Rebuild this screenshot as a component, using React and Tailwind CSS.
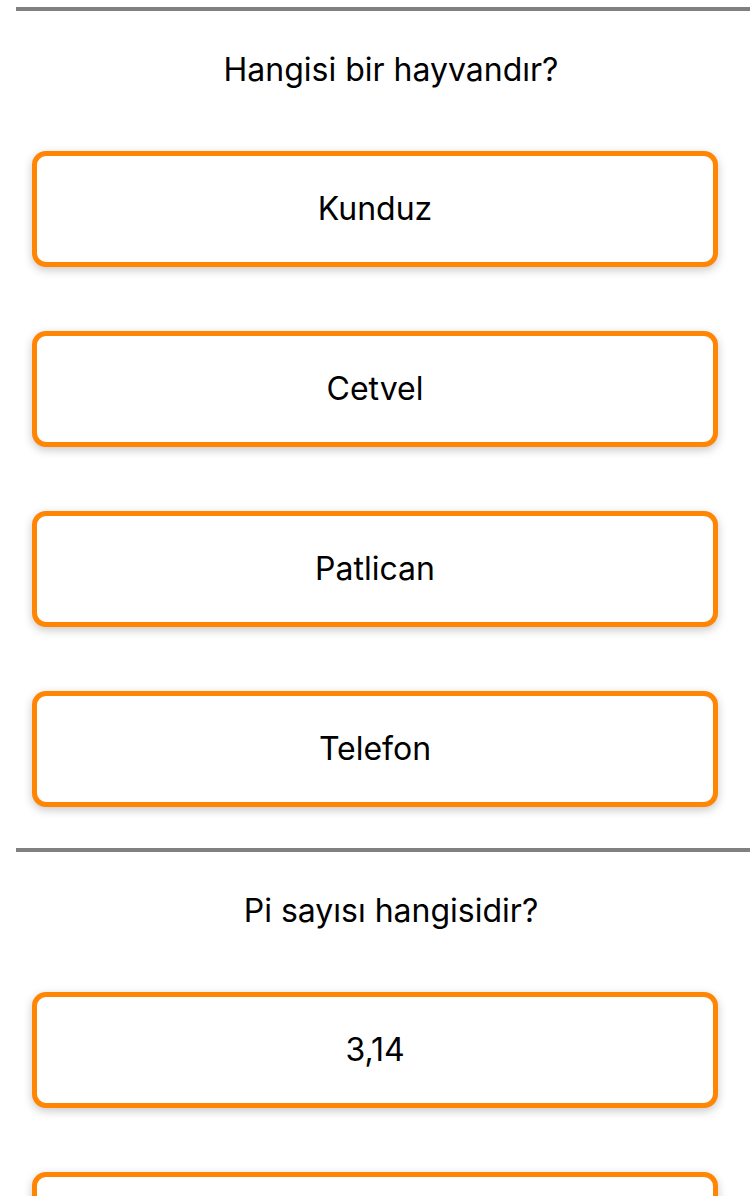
const quiz = [
  { q: 'Hangisi bir hayvandır?', answers: ['Kunduz', 'Cetvel', 'Patlican', 'Telefon'] },
  { q: 'Pi sayısı hangisidir?', answers: ['3,14', '2,71'] },
];

function Answer({ text }) {
  return (
    <button className="mx-8 h-[116px] shrink-0 rounded-[14px] border-[5px] border-[#ff8503] bg-white shadow-[0_3px_10px_rgba(0,0,0,0.22)] flex items-center justify-center text-[32px] text-black">
      {text}
    </button>
  );
}

function Question({ item, first }) {
  return (
    <section className={first ? 'pt-[7px]' : 'pt-[41px]'}>
      <div className="ml-4 h-[4px] bg-[#808080]" />
      <h2 className="pl-8 pt-[40px] mb-[62px] h-[78px] leading-[38px] text-center text-[32px] font-normal text-black">
        {item.q}
      </h2>
      <div className="flex flex-col gap-[64px]">
        {item.answers.map((a) => (
          <Answer key={a} text={a} />
        ))}
      </div>
    </section>
  );
}

export default function App() {
  return (
    <div className="h-[1196px] w-[750px] overflow-hidden bg-white font-['Inter',sans-serif]">
      {quiz.map((item, i) => (
        <Question key={item.q} item={item} first={i === 0} />
      ))}
    </div>
  );
}
